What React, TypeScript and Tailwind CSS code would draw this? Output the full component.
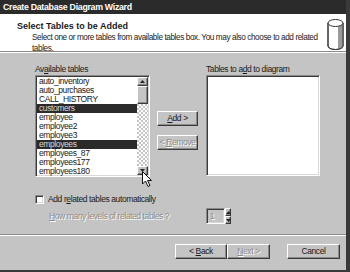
const TABLES = [
  'auto_inventory',
  'auto_purchases',
  'CALL_HISTORY',
  'customers',
  'employee',
  'employee2',
  'employee3',
  'employees',
  'employees_87',
  'employees177',
  'employees180',
];
const SELECTED = ['customers', 'employees'];

const raised =
  'border border-t-white border-l-white border-b-[#3a3a3a] border-r-[#3a3a3a] shadow-[inset_-1px_-1px_0_#8a8a8a]';
const sunken =
  'border border-t-[#8a8a8a] border-l-[#8a8a8a] border-b-white border-r-white shadow-[inset_1px_1px_0_#3a3a3a,inset_-1px_-1px_0_#d8d8d8]';
const disabled = 'text-[#8c8c8c] [text-shadow:1px_1px_0_#fff]';

function Arrow({ up }: { up?: boolean }) {
  return (
    <svg width="5" height="3" viewBox="0 0 5 3">
      <path d={up ? 'M2.5 0 L5 3 L0 3 Z' : 'M0 0 L5 0 L2.5 3 Z'} fill="#222" />
    </svg>
  );
}

function Btn({ children, off, w }: { children: React.ReactNode; off?: boolean; w: string }) {
  return (
    <div className={`${raised} ${w} h-[15px] bg-[#c4c4c4] grid place-items-center text-[8.5px] tracking-[-0.4px] ${off ? disabled : 'text-[#1a1a1a]'}`}>
      <span>{children}</span>
    </div>
  );
}

export default function App() {
  return (
    <div className="relative w-[350px] h-[272px] overflow-hidden bg-[#3a3a3a] font-['Liberation_Sans',Arial,sans-serif]">
      <div className="w-[346px] h-[270px] bg-[#c4c4c4] flex flex-col">
        {/* title bar */}
        <div className="h-[14px] bg-[#2b2b2b] text-white font-bold text-[8.8px] tracking-[-0.3px] leading-[14px] pl-[3px]">
          Create Database Diagram Wizard
        </div>

        {/* header */}
        <div className="h-[37px] bg-white flex">
          <div className="pl-[17px] pt-[6px]">
            <p className="font-bold text-[9px] leading-[12px] text-[#1a1a1a]">Select Tables to be Added</p>
            <p className="pl-[15px] w-[310px] text-[8.2px] tracking-[-0.4px] leading-[11px] text-[#222]">
              Select one or more tables from available tables box. You may also choose to add related tables.
            </p>
          </div>
          <svg className="ml-auto mr-[8px] mt-[4px] shrink-0" width="17" height="33" viewBox="0 0 17 33">
            <path d="M1 5 V28 A7.5 3.5 0 0 0 16 28 V5" fill="#fff" stroke="#333" strokeWidth="1" />
            <path d="M11 8 V31.2 A7.5 3.5 0 0 0 16 28 V5 Z" fill="#9a9a9a" />
            <path d="M1 5 V28 A7.5 3.5 0 0 0 16 28 V5" fill="none" stroke="#333" strokeWidth="1" />
            <ellipse cx="8.5" cy="5" rx="7.5" ry="3.5" fill="#fff" stroke="#333" strokeWidth="1" />
          </svg>
        </div>
        <div className="h-px bg-[#8a8a8a]" />
        <div className="h-px bg-white" />

        {/* body */}
        <div className="pl-[35px] pt-[11px] text-[8.5px] tracking-[-0.4px] text-[#1a1a1a]">
          <div className="flex">
            <div className="w-[115px]">
              <p className="h-[11px] leading-[10px]">
                Av<span className="underline">a</span>ilable tables
              </p>
              <div className={`${sunken} h-[102px] bg-white flex p-px`}>
                <div className="flex-1">
                  {TABLES.map((t) => (
                    <div
                      key={t}
                      className={`h-[9px] leading-[9px] pl-[2px] ${
                        SELECTED.includes(t) ? 'bg-[#2a2a2a] text-[#d8d8d8]' : ''
                      }`}
                    >
                      {t}
                    </div>
                  ))}
                </div>
                {/* scrollbar */}
                <div className="w-[11px] flex flex-col">
                  <div className={`${raised} h-[9px] bg-[#c4c4c4] grid place-items-center`}>
                    <Arrow up />
                  </div>
                  <div className={`${raised} h-[18px] bg-[#c4c4c4]`} />
                  <div className="flex-1 bg-[repeating-conic-gradient(#fff_0%_25%,#c4c4c4_0%_50%)] bg-size-[4px_4px]" />
                  <div className={`${raised} h-[9px] bg-[#c4c4c4] grid place-items-center`}>
                    <Arrow />
                  </div>
                </div>
              </div>
            </div>

            <div className="ml-[7px] pt-[47px] flex flex-col gap-[9px]">
              <Btn w="w-[41px]">
                <span className="underline">A</span>dd &gt;
              </Btn>
              <Btn w="w-[41px]" off>
                &lt; <span className="underline">R</span>emove
              </Btn>
            </div>

            <div className="ml-[8px] w-[114px]">
              <p className="h-[11px] leading-[10px]">
                Tables to a<span className="underline">d</span>d to diagram
              </p>
              <div className={`${sunken} h-[101px] bg-white`} />
            </div>
          </div>

          {/* options */}
          <div className="mt-[17px] flex items-center gap-[4px] h-[10px]">
            <div className={`${sunken} w-[9px] h-[9px] bg-white`} />
            <span>
              Add r<span className="underline">e</span>lated tables automatically
            </span>
          </div>
          <div className="mt-[4px] flex items-center">
            <span className={`pl-[14px] w-[171px] ${disabled}`}>
              <span className="underline">H</span>ow many levels of related tables ?
            </span>
            <div className="flex h-[16px]">
              <div className={`${sunken} w-[19px] bg-[#c4c4c4] pl-[3px] leading-[14px] ${disabled}`}>1</div>
              <div className="w-[6px] flex flex-col">
                <div className={`${raised} flex-1 bg-[#c4c4c4] grid place-items-center`}>
                  <Arrow up />
                </div>
                <div className={`${raised} flex-1 bg-[#c4c4c4] grid place-items-center`}>
                  <Arrow />
                </div>
              </div>
            </div>
          </div>
        </div>

        {/* separator */}
        <div className="mt-[10px] h-px bg-[#8a8a8a]" />
        <div className="h-px bg-white" />

        {/* footer buttons */}
        <div className="mt-[8px] flex justify-end pr-[6px]">
          <Btn w="w-[52px]">
            &lt; <span className="underline">B</span>ack
          </Btn>
          <Btn w="w-[43px]" off>
            <span className="underline">N</span>ext &gt;
          </Btn>
          <div className="w-[17px]" />
          <Btn w="w-[53px]">Cancel</Btn>
        </div>
      </div>

      {/* mouse pointer */}
      <svg className="absolute left-[142px] top-[171px]" width="11" height="17" viewBox="0 0 11 17">
        <path d="M0.5 0.5 V13 L3.5 10 L6 15.5 L8 14.5 L5.5 9.5 H9.5 Z" fill="#fff" stroke="#111" strokeWidth="1" />
      </svg>
    </div>
  );
}
